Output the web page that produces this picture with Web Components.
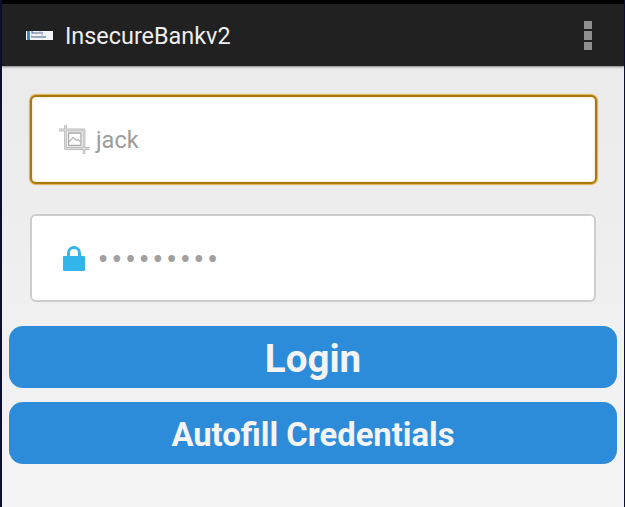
<!DOCTYPE html>
<html>
<head>
<meta charset="utf-8">
<title>InsecureBankv2</title>
<style>
    html, body {
        margin: 0;
        height: 100%;
        background: #0b1033;
    }
    body {
        box-sizing: border-box;
        height: 507px;
        overflow: hidden;
        padding: 0 1px 0 2px;
        background: #0b1033;
        font-family: Roboto, sans-serif;
    }
</style>
</head>
<body>
<login-screen>
    <app-bar slot="bar" title="InsecureBankv2"></app-bar>
    <text-field focused value="jack">
        <svg slot="icon" width="32" height="31" viewBox="0 0 32 31" fill="none" stroke-linejoin="round">
            <g stroke="#bdbdbd" stroke-width="2.8">
                <path d="M1 6H7.5M7.5 1V24.5H31.5" />
                <path d="M7.5 6H26V30" />
            </g>
            <g stroke="#ffffff" stroke-width="0.7" opacity="0.7">
                <path d="M1 6H7.5M7.5 1V24.5H31.5" />
                <path d="M7.5 6H26V30" />
            </g>
            <path d="M10.5 9H23V21.5H10.5Z" stroke="#a9a9a9" stroke-width="1.3" />
            <path d="M11 18L15 13.5L18.5 16.5L20 15.5L23 18" stroke="#b8b8b8" stroke-width="1.2" />
        </svg>
    </text-field>
    <text-field value="•••••••••" password>
        <svg slot="icon" width="24" height="28" viewBox="0 0 24 28">
            <path d="M6.5 14V9a5.5 5.5 0 0 1 11 0v5" fill="none" stroke="#32b5e8" stroke-width="3" />
            <rect x="1" y="12" width="22" height="15" rx="1" fill="#32b5e8" />
        </svg>
    </text-field>
    <blue-button size="38.5" slot="buttons">Login</blue-button>
    <blue-button size="32.8" slot="buttons">Autofill Credentials</blue-button>
</login-screen>

<script>
class LoginScreen extends HTMLElement {
    constructor() {
        super();
        this.shadowDOM = this.attachShadow({mode: 'open'});
        this.shadowDOM.innerHTML = `
        <style>
            :host {
                display: block;
                height: 507px;
                background: linear-gradient(#e9e9e9, #f4f4f4);
                border-top: 4px solid #000;
                box-sizing: border-box;
            }
            .fields {
                display: flex;
                flex-direction: column;
                gap: 30px;
                padding: 29px 27px 24px 28px;
            }
            .buttons {
                display: flex;
                flex-direction: column;
                gap: 14px;
                padding: 0 7px 0 7px;
            }
        </style>
        <slot name="bar"></slot>
        <div class="fields"><slot></slot></div>
        <div class="buttons"><slot name="buttons"></slot></div>
        `;
    }
}

class AppBar extends HTMLElement {
    constructor() {
        super();
        this.shadowDOM = this.attachShadow({mode: 'open'});
    }

    connectedCallback() {
        this.shadowDOM.innerHTML = `
        <style>
            :host {
                display: flex;
                align-items: center;
                height: 62px;
                box-sizing: border-box;
                padding: 0 32px 0 24px;
                background: #212121;
                box-shadow: 0 1px 2px rgba(0, 0, 0, 0.45);
                color: #eeeeee;
                position: relative;
            }
            .logo {
                display: flex;
                align-items: center;
                gap: 1px;
                width: 27px;
                height: 9px;
                margin-right: 12px;
                background: #f2f4f8;
                overflow: hidden;
                flex: none;
            }
            .mark {
                width: 3px;
                height: 9px;
                margin-left: 1px;
                background: #3f86c8;
                flex: none;
            }
            .logo span {
                display: block;
                font: 700 3px/4px "Liberation Sans", sans-serif;
                color: #4a5a78;
                white-space: nowrap;
            }
            h1 {
                margin: 1px 0 0;
                font: 400 23.4px Roboto, sans-serif;
                flex: 1;
            }
            .menu {
                display: flex;
                flex-direction: column;
                gap: 2px;
                padding-top: 1px;
            }
            .menu i {
                display: block;
                width: 8px;
                height: 8.4px;
                background: #8f8f8f;
            }
        </style>
        <div class="logo"><div class="mark"></div><span>Security<br>Innovation</span></div>
        <h1>${this.getAttribute('title')}</h1>
        <div class="menu"><i></i><i></i><i></i></div>
        `;
    }
}

class TextField extends HTMLElement {
    constructor() {
        super();
        this.shadowDOM = this.attachShadow({mode: 'open'});
    }

    connectedCallback() {
        this.shadowDOM.innerHTML = `
        <style>
            :host {
                display: flex;
                align-items: center;
                gap: 7px;
                height: 89px;
                box-sizing: border-box;
                padding: 0 0 0 28px;
                background: #fff;
                border: 2px solid #cdcdcd;
                border-radius: 6px;
                color: #9c9c9c;
                font: 400 23.5px Roboto, sans-serif;
            }
            :host([focused]) {
                border: 2px solid #a9780f;
                box-shadow: 0 0 1px 1px #dfae4e, inset 0 0 2px #e8c47a;
                padding-left: 26px;
                gap: 6px;
            }
            :host([focused]) .value {
                margin-top: 2px;
            }
            :host([password]) {
                gap: 11px;
                padding-left: 30px;
                height: 88px;
                width: 566px;
            }
            :host([password]) .value {
                font: 700 19px "DejaVu Sans", sans-serif;
                letter-spacing: 1.55px;
                color: #a0a0a0;
                margin-top: 2px;
            }
            ::slotted(svg) {
                flex: none;
            }
            .value {
                line-height: 1;
            }
        </style>
        <slot name="icon"></slot>
        <span class="value">${this.getAttribute('value')}</span>
        `;
    }
}

class BlueButton extends HTMLElement {
    constructor() {
        super();
        this.shadowDOM = this.attachShadow({mode: 'open'});
    }

    connectedCallback() {
        this.shadowDOM.innerHTML = `
        <style>
            :host {
                display: flex;
                align-items: center;
                justify-content: center;
                height: 62px;
                box-sizing: border-box;
                padding-top: 3px;
                background: #2d8cd9;
                border-radius: 14px;
                color: #f4f4f4;
                font: 700 ${this.getAttribute('size')}px Roboto, sans-serif;
            }
        </style>
        <slot></slot>
        `;
    }
}

customElements.define('login-screen', LoginScreen);
customElements.define('app-bar', AppBar);
customElements.define('text-field', TextField);
customElements.define('blue-button', BlueButton);
</script>
</body>
</html>
